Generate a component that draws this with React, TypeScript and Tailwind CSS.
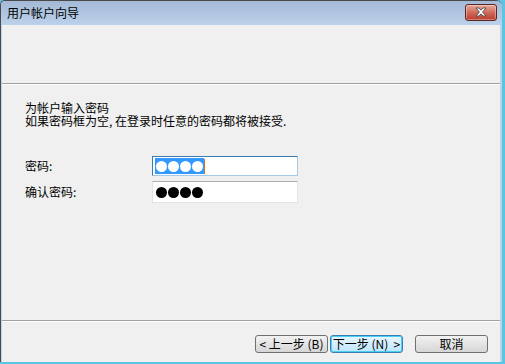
import React from "react";

const font = { fontFamily: '"Noto Sans CJK SC", "Noto Sans", sans-serif' };

function Dots({ selected }: { selected?: boolean }) {
  return (
    <div className="flex items-center h-full">
      <div className={"flex items-center gap-[1px] h-[16px] px-[1px] " + (selected ? "bg-[#3399ff]" : "")}>
        {[0, 1, 2, 3].map((i) => (
          <span
            key={i}
            className={"block w-[11px] h-[11px] rounded-full " + (selected ? "bg-white" : "bg-black")}
          />
        ))}
      </div>
      {selected && <span className="block w-[1px] h-[15px] bg-[#e07020]" />}
    </div>
  );
}

export default function App() {
  return (
    <div
      className="w-[505px] h-[364px] overflow-hidden bg-[#5ac3e6] text-[12px] text-black"
      style={font}
    >
      <div className="w-[502px] h-[362px] flex flex-col border-t border-l border-[#4a4a4a] rounded-tl-[5px] rounded-tr-[6px] overflow-hidden bg-[#c0d3ea]">
        {/* title bar */}
        <div className="h-[24px] flex items-center justify-between bg-gradient-to-b from-[#a3b9d6] to-[#bcd1ea] pl-[6px] pr-[5px] shrink-0">
          <span className="leading-none text-[12px]">用户帐户向导</span>
          <div className="w-[32px] h-[17px] mt-[-2px] rounded-[3px] border border-[#5a2620] bg-gradient-to-b from-[#e4aa9d] via-[#cf6a5a] to-[#bb3a2a] flex items-center justify-center shadow-[inset_0_0_0_1px_rgba(255,255,255,0.35)]">
            <svg width="14" height="10" viewBox="0 0 14 10">
              <path
                d="M2 1 L5 1 L7 3.2 L9 1 L12 1 L8.6 5 L12 9 L9 9 L7 6.8 L5 9 L2 9 L5.4 5 Z"
                fill="#ffffff"
                stroke="#4a4a4a"
                strokeWidth="0.9"
                strokeLinejoin="round"
              />
            </svg>
          </div>
        </div>
        {/* client */}
        <div className="flex-1 flex flex-col bg-[#f0f0f0] ml-[1px] mr-[2px]">
          <div className="h-[58px] shrink-0" />
          <div className="h-[1px] bg-[#a0a0a0]" />
          <div className="h-[1px] bg-white" />
          <div className="flex-1 flex flex-col pl-[23px] pt-[16px]">
            <p className="leading-[13px]">
              为帐户输入密码
              <br />
              如果密码框为空, 在登录时任意的密码都将被接受.
            </p>
            <div className="mt-[29px] flex items-center">
              <span className="w-[127px]">密码:</span>
              <div className="w-[146px] h-[20px] bg-white border border-[#3d7bad] border-b-[#a6c8e8] border-r-[#a6c8e8] pl-[2px]">
                <Dots selected />
              </div>
            </div>
            <div className="mt-[5px] flex items-center">
              <span className="w-[127px]">确认密码:</span>
              <div className="w-[146px] h-[22px] bg-white border border-[#e2e3ea] border-t-[#abadb3] pl-[2px]">
                <Dots />
              </div>
            </div>
          </div>
          <div className="h-[1px] bg-[#a0a0a0]" />
          <div className="h-[1px] bg-white" />
          <div className="h-[40px] shrink-0 flex items-start pt-[13px] pl-[253px] gap-[2px]">
            <button className="w-[73px] h-[18px] rounded-[3px] border border-[#707070] bg-gradient-to-b from-[#f2f2f2] to-[#d6d6d6] flex items-center justify-center leading-none text-[12px] whitespace-pre">
              {"< 上一步 (B)"}
            </button>
            <button className="w-[73px] h-[18px] rounded-[3px] border border-[#3c7fb1] bg-gradient-to-b from-[#eaf6fd] to-[#bee6fd] shadow-[inset_0_0_0_1px_#48d0f5] flex items-center justify-center leading-none text-[12px] whitespace-pre">
              {"下一步 (N)  >"}
            </button>
            <button className="ml-[10px] w-[73px] h-[18px] rounded-[3px] border border-[#707070] bg-gradient-to-b from-[#f2f2f2] to-[#d6d6d6] flex items-center justify-center leading-none text-[12px]">
              取消
            </button>
          </div>
        </div>
      </div>
    </div>
  );
}
